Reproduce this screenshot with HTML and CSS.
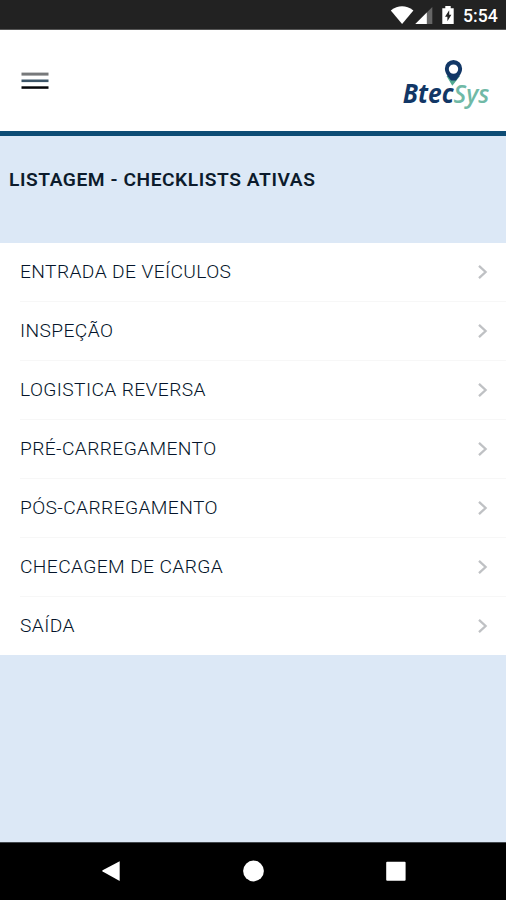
FILE: index.html
```html
<!DOCTYPE html>
<html lang="pt-BR">
<head>
<meta charset="utf-8">
<title>Checklists</title>
<link rel="stylesheet" href="styles.css">
</head>
<body>
<div class="status">
  <svg class="status-icons" width="66" height="20" viewBox="390 5 66 20">
    <path d="M390.8 10.4Q402 2.2 413.4 10.4L402.1 24Z" fill="#fff"/>
    <path d="M432.3 7V24H415.3Z" fill="#666"/>
    <path d="M426.8 12.5V24H415.3Z" fill="#fff"/>
    <path d="M442.3 8.2H445.3V6H450.7V8.2H453.7V24H442.3Z" fill="#fff"/>
    <path d="M449.2 10.2L445 16.7H447.4V21.3L451.4 14.8H449.2Z" fill="#222"/>
  </svg>
  <span class="clock">5:54</span>
</div>
<header class="header">
  <svg class="menu" width="28" height="18" viewBox="0 0 28 18">
    <rect x=".5" y=".6" width="27" height="3" fill="#77797b"/>
    <rect x=".5" y="7.5" width="27" height="2.6" fill="#3d5668"/>
    <rect x=".5" y="14.3" width="27" height="2.5" fill="#050608"/>
  </svg>
  <svg class="logo" width="92" height="52" viewBox="400 58 92 52">
    <path d="M446.5 76L452.3 85.8L460 76Z" fill="#4fa890"/>
    <path fill-rule="evenodd" d="M453.5 60A8.6 8.6 0 0 0 444.9 68.6C444.9 73.5 448 76.5 451 80.4H456C459 76.5 462.1 73.5 462.1 68.6A8.6 8.6 0 0 0 453.5 60ZM453.5 64.4A4.7 4.7 0 1 1 453.5 73.8A4.7 4.7 0 1 1 453.5 64.4Z" fill="#123766"/>
    <text x="402.8" y="103.2" textLength="86.5" lengthAdjust="spacingAndGlyphs"><tspan class="logo-a">Btec</tspan><tspan class="logo-b">Sys</tspan></text>
  </svg>
</header>
<main class="main">
  <h1 class="title">LISTAGEM - CHECKLISTS ATIVAS</h1>
  <ul class="list">
    <li class="row"><span class="label">ENTRADA DE VEÍCULOS</span><svg class="chev" viewBox="0 0 12 16"><path d="M2 1.8L8.6 8L2 14.2"/></svg></li>
    <li class="row"><span class="label">INSPEÇÃO</span><svg class="chev" viewBox="0 0 12 16"><path d="M2 1.8L8.6 8L2 14.2"/></svg></li>
    <li class="row"><span class="label">LOGISTICA REVERSA</span><svg class="chev" viewBox="0 0 12 16"><path d="M2 1.8L8.6 8L2 14.2"/></svg></li>
    <li class="row"><span class="label">PRÉ-CARREGAMENTO</span><svg class="chev" viewBox="0 0 12 16"><path d="M2 1.8L8.6 8L2 14.2"/></svg></li>
    <li class="row"><span class="label">PÓS-CARREGAMENTO</span><svg class="chev" viewBox="0 0 12 16"><path d="M2 1.8L8.6 8L2 14.2"/></svg></li>
    <li class="row"><span class="label">CHECAGEM DE CARGA</span><svg class="chev" viewBox="0 0 12 16"><path d="M2 1.8L8.6 8L2 14.2"/></svg></li>
    <li class="row"><span class="label">SAÍDA</span><svg class="chev" viewBox="0 0 12 16"><path d="M2 1.8L8.6 8L2 14.2"/></svg></li>
  </ul>
</main>
<nav class="nav">
  <svg width="22" height="22" viewBox="0 0 22 22"><path d="M19.7 1.2V20.9L2.6 11.6Q1.6 11 2.6 10.3Z"/></svg>
  <svg width="22" height="22" viewBox="0 0 22 22"><circle cx="10.5" cy="11" r="10.4"/></svg>
  <svg width="22" height="22" viewBox="0 0 22 22"><rect x="1.2" y="1.7" width="19.4" height="19" rx="1"/></svg>
</nav>
</body>
</html>
```
FILE: styles.css
```css
* { box-sizing: border-box; }
body {
  margin: 0;
  height: 900px;
  display: flex;
  flex-direction: column;
  overflow: hidden;
  background: #dce8f6;
  font-family: Roboto, "Liberation Sans", sans-serif;
}
.status {
  height: 30px;
  flex: none;
  display: flex;
  align-items: center;
  justify-content: flex-end;
  gap: 7px;
  padding-right: 9px;
  background: #222;
  border-bottom: 1px solid #555;
}
.clock {
  width: 34px;
  color: #fff;
  font-size: 17.6px;
  font-weight: 500;
  line-height: 20px;
  padding-top: 2px;
  white-space: nowrap;
}
.header {
  height: 106px;
  flex: none;
  display: flex;
  align-items: flex-start;
  justify-content: space-between;
  padding: 28px 14px 0 21px;
  background: #fff;
  border-bottom: 5px solid #0d4c75;
}
.menu { margin-top: 14px; }
.logo {
  font-family: "Open Sans", "Noto Sans", sans-serif;
  font-size: 26px;
  font-style: italic;
}
.logo-a { font-weight: 700; fill: #123766; }
.logo-b { font-weight: 600; fill: #70b9a6; }
.main { flex: 1; }
.title {
  margin: 0;
  height: 106.5px;
  padding: 32px 0 0 9px;
  color: #0c1b2c;
  font-size: 19.2px;
  font-weight: 600;
  letter-spacing: 0.55px;
  line-height: 24px;
  white-space: nowrap;
}
.list {
  margin: 0;
  padding: 0 0 0 20px;
  list-style: none;
  background: #fff;
}
.row {
  height: 59px;
  display: flex;
  align-items: center;
  justify-content: space-between;
  padding-right: 17px;
  border-bottom: 1px solid #f7f7f7;
}
.row:last-child { height: 58.5px; border-bottom-color: #fff; }
.label {
  color: #04142a;
  font-size: 19.2px;
  font-weight: 300;
  letter-spacing: 0.39px;
  line-height: 24px;
  padding-top: 1px;
  white-space: nowrap;
}
.chev {
  width: 12px;
  height: 16px;
  margin-top: 1px;
  fill: none;
  stroke: #bfc1c4;
  stroke-width: 2.3;
}
.nav {
  height: 58px;
  flex: none;
  display: flex;
  justify-content: space-between;
  align-items: center;
  padding: 0 99px 2px 100px;
  background: #000;
  border-top: 1px solid #42474c;
  fill: #fff;
}
```
